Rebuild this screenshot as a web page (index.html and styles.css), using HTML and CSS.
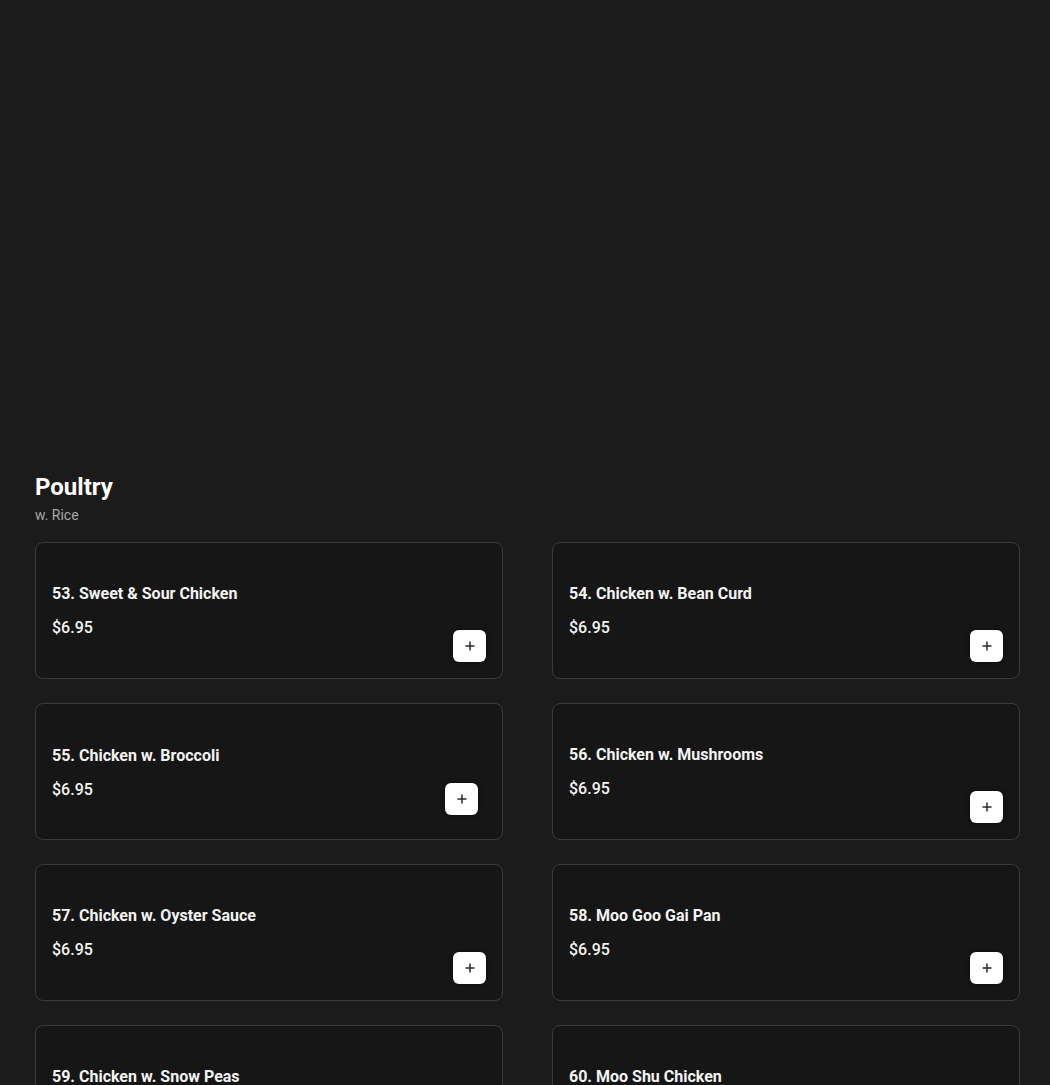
FILE: index.html
```html
<!DOCTYPE html>
<html lang="en">
<head>
<meta charset="utf-8">
<title>Poultry</title>
<link rel="stylesheet" href="styles.css">
</head>
<body>
<main class="page">
  <div class="hero-space"></div>
  <section class="category">
    <header class="category-head">
      <h2 class="category-title">Poultry</h2>
      <p class="category-sub">w. Rice</p>
    </header>
    <div class="grid">
      <article class="card">
        <h3 class="item-name">53. Sweet &amp; Sour Chicken</h3>
        <div class="card-foot">
          <span class="price">$6.95</span>
          <button class="add-btn" aria-label="Add"><svg viewBox="0 0 12 12" width="12" height="12"><path d="M6 1.5v9M1.5 6h9" stroke="#2a2a2a" stroke-width="1.5" fill="none"/></svg></button>
        </div>
      </article>
      <article class="card">
        <h3 class="item-name">54. Chicken w. Bean Curd</h3>
        <div class="card-foot">
          <span class="price">$6.95</span>
          <button class="add-btn" aria-label="Add"><svg viewBox="0 0 12 12" width="12" height="12"><path d="M6 1.5v9M1.5 6h9" stroke="#2a2a2a" stroke-width="1.5" fill="none"/></svg></button>
        </div>
      </article>
      <article class="card">
        <h3 class="item-name item-name--low">55. Chicken w. Broccoli</h3>
        <div class="card-foot">
          <span class="price">$6.95</span>
          <button class="add-btn add-btn--shifted" aria-label="Add"><svg viewBox="0 0 12 12" width="12" height="12"><path d="M6 1.5v9M1.5 6h9" stroke="#2a2a2a" stroke-width="1.5" fill="none"/></svg></button>
        </div>
      </article>
      <article class="card">
        <h3 class="item-name">56. Chicken w. Mushrooms</h3>
        <div class="card-foot">
          <span class="price">$6.95</span>
          <button class="add-btn" aria-label="Add"><svg viewBox="0 0 12 12" width="12" height="12"><path d="M6 1.5v9M1.5 6h9" stroke="#2a2a2a" stroke-width="1.5" fill="none"/></svg></button>
        </div>
      </article>
      <article class="card">
        <h3 class="item-name">57. Chicken w. Oyster Sauce</h3>
        <div class="card-foot">
          <span class="price">$6.95</span>
          <button class="add-btn" aria-label="Add"><svg viewBox="0 0 12 12" width="12" height="12"><path d="M6 1.5v9M1.5 6h9" stroke="#2a2a2a" stroke-width="1.5" fill="none"/></svg></button>
        </div>
      </article>
      <article class="card">
        <h3 class="item-name">58. Moo Goo Gai Pan</h3>
        <div class="card-foot">
          <span class="price">$6.95</span>
          <button class="add-btn" aria-label="Add"><svg viewBox="0 0 12 12" width="12" height="12"><path d="M6 1.5v9M1.5 6h9" stroke="#2a2a2a" stroke-width="1.5" fill="none"/></svg></button>
        </div>
      </article>
      <article class="card">
        <h3 class="item-name">59. Chicken w. Snow Peas</h3>
        <div class="card-foot">
          <span class="price">$6.95</span>
          <button class="add-btn" aria-label="Add"><svg viewBox="0 0 12 12" width="12" height="12"><path d="M6 1.5v9M1.5 6h9" stroke="#2a2a2a" stroke-width="1.5" fill="none"/></svg></button>
        </div>
      </article>
      <article class="card">
        <h3 class="item-name">60. Moo Shu Chicken</h3>
        <div class="card-foot">
          <span class="price">$6.95</span>
          <button class="add-btn" aria-label="Add"><svg viewBox="0 0 12 12" width="12" height="12"><path d="M6 1.5v9M1.5 6h9" stroke="#2a2a2a" stroke-width="1.5" fill="none"/></svg></button>
        </div>
      </article>
    </div>
  </section>
</main>
</body>
</html>
```

FILE: styles.css
```css
* { box-sizing: border-box; }
html, body {
  margin: 0;
  padding: 0;
  background: #1b1b1b;
  color: #ffffff;
  font-family: Roboto, "Liberation Sans", Arial, sans-serif;
}
.page {
  padding: 0 30px 0 35px;
  height: 1085px;
  overflow: hidden;
}
.hero-space {
  height: 473px;
}
.category-head {
  margin-bottom: 17px;
}
.category-title {
  margin: 0;
  font-size: 24px;
  line-height: 28px;
  font-weight: 700;
  color: #ffffff;
}
.category-sub {
  margin: 4px 0 0;
  font-size: 14px;
  line-height: 20px;
  color: #a8a8a8;
}
.grid {
  display: grid;
  grid-template-columns: 468px 468px;
  column-gap: 49px;
  row-gap: 24px;
}
.card {
  background: #161616;
  border: 1px solid #3a3a3a;
  border-radius: 8px;
  padding: 40px 16px 15px;
  height: 137px;
}
.item-name {
  margin: 0;
  font-size: 16px;
  line-height: 21px;
  font-weight: 700;
  color: #f4f4f4;
}
.item-name--low {
  margin-top: 1px;
}
.card-foot {
  display: flex;
  justify-content: space-between;
  align-items: flex-start;
  margin-top: 13px;
}
.price {
  font-size: 16px;
  line-height: 21px;
  font-weight: 500;
  color: #f4f4f4;
}
.add-btn {
  width: 33px;
  height: 32px;
  margin-top: 13px;
  border: none;
  border-radius: 6px;
  background: #ffffff;
  box-shadow: 0 0 4px rgba(0, 0, 0, 0.6);
  display: flex;
  align-items: center;
  justify-content: center;
  padding: 0;
}
.add-btn--shifted {
  margin-top: 4px;
  margin-right: 8px;
}
```
